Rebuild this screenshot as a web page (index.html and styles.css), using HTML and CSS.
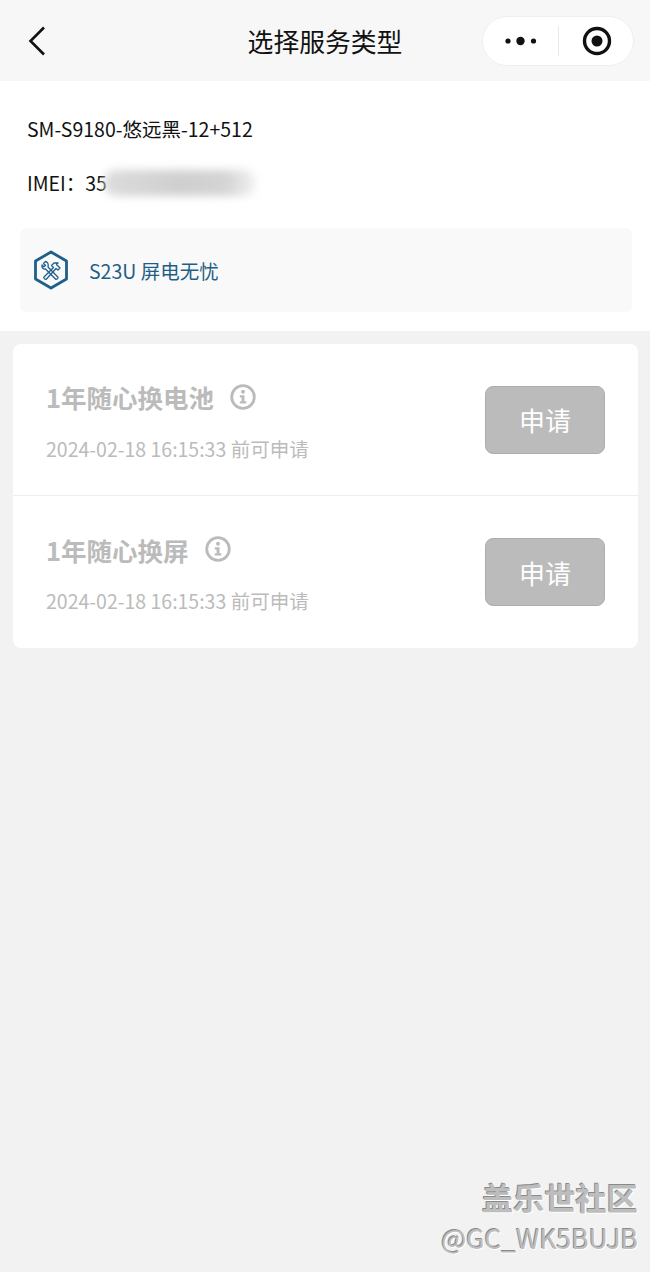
FILE: index.html
```html
<!DOCTYPE html>
<html lang="zh-CN">
<head>
    <meta charset="UTF-8">
    <meta name="viewport" content="width=device-width, initial-scale=1.0">
    <title>选择服务类型</title>
    <link rel="stylesheet" href="styles.css">
</head>
<body>
    <header class="navbar">
        <svg class="back" width="20" height="32" viewBox="0 0 20 32">
            <path d="M17 2.500 L3.500 16 L17 29.500" fill="none" stroke="#111" stroke-width="2.600"/>
        </svg>
        <h1 class="nav-title">选择服务类型</h1>
        <div class="capsule">
            <svg class="capsule-dots" width="32" height="10" viewBox="0 0 32 10">
                <circle cx="3" cy="5" r="2.600" fill="#111"/>
                <circle cx="15.500" cy="5" r="4.200" fill="#111"/>
                <circle cx="28.500" cy="5" r="2.600" fill="#111"/>
            </svg>
            <span class="capsule-line"></span>
            <svg class="capsule-target" width="30" height="30" viewBox="0 0 30 30">
                <circle cx="15" cy="15" r="12.500" fill="none" stroke="#111" stroke-width="3.400"/>
                <circle cx="15" cy="15" r="5.500" fill="#111"/>
            </svg>
        </div>
    </header>

    <section class="device">
        <p class="device-line">SM-S9180-悠远黑-12+512</p>
        <p class="device-line imei">IMEI：35<span class="imei-blur"></span></p>
        <div class="plan">
            <svg class="plan-icon" width="36" height="40" viewBox="0 0 36 40">
                <path d="M18 2 L33.500 11 L33.500 29 L18 38 L2.500 29 L2.500 11 Z" fill="none" stroke="#1f5f8b" stroke-width="2.800" stroke-linejoin="round"/>
                <g fill="none" stroke="#1f5f8b" stroke-width="1.300" stroke-linejoin="round">
                    <path d="M12.500 11.500 L10.500 13.500 L12.500 15.500 L10.800 16.800 L9 15 C8.300 17.500 10.200 19.500 12.500 19 L22.500 29 C23.500 30 25.800 28 24.800 27 L15 17 C15.800 14 14.500 11.800 12.500 11.500 Z"/>
                    <path d="M11 27 L20.500 17.500 L18.500 15.500 L21 13 L25 13 L23.500 14.500 L27 18 L25 20 L23 18.500 L13.500 29 C12.500 30 10 28 11 27 Z"/>
                </g>
            </svg>
            <span class="plan-name">S23U 屏电无忧</span>
        </div>
    </section>

    <main class="card">
        <div class="service">
            <div class="service-info">
                <div class="service-head">
                    <span class="service-name">1年随心换电池</span>
                    <svg class="info-icon" width="26" height="26" viewBox="0 0 26 26">
                        <circle cx="13" cy="13" r="11.300" fill="none" stroke="#bbb" stroke-width="2.800"/>
                        <circle cx="13" cy="7.800" r="2" fill="#bbb"/>
                        <path d="M9.800 11.200 H14.500 V17.300 H16.300 V19.500 H9.800 V17.300 H11.600 V13.400 H9.800 Z" fill="#bbb"/>
                    </svg>
                </div>
                <p class="service-time">2024-02-18 16:15:33 前可申请</p>
            </div>
            <button class="apply" disabled>申请</button>
        </div>
        <div class="service">
            <div class="service-info">
                <div class="service-head">
                    <span class="service-name">1年随心换屏</span>
                    <svg class="info-icon" width="26" height="26" viewBox="0 0 26 26">
                        <circle cx="13" cy="13" r="11.300" fill="none" stroke="#bbb" stroke-width="2.800"/>
                        <circle cx="13" cy="7.800" r="2" fill="#bbb"/>
                        <path d="M9.800 11.200 H14.500 V17.300 H16.300 V19.500 H9.800 V17.300 H11.600 V13.400 H9.800 Z" fill="#bbb"/>
                    </svg>
                </div>
                <p class="service-time">2024-02-18 16:15:33 前可申请</p>
            </div>
            <button class="apply" disabled>申请</button>
        </div>
    </main>

    <div class="watermark">
        <div class="watermark-name">盖乐世社区</div>
        <div class="watermark-user">@GC_WK5BUJB</div>
    </div>
</body>
</html>
```

FILE: styles.css
```css
* {
    box-sizing: border-box;
}
html, body {
    margin: 0;
    padding: 0;
}
body {
    position: relative;
    width: 650px;
    height: 1272px;
    overflow: hidden;
    background: #f2f2f2;
    font-family: "Noto Sans CJK SC", "Noto Sans", sans-serif;
    color: #111;
}
p {
    margin: 0;
}

/* Top bar */
.navbar {
    position: relative;
    height: 81px;
    background: #f7f7f7;
    display: flex;
    align-items: center;
    justify-content: space-between;
    padding: 0 16px 0 27px;
}
.nav-title {
    position: absolute;
    left: 0;
    right: 0;
    top: 21px;
    margin: 0;
    text-align: center;
    font-size: 25.800px;
    line-height: 40px;
    font-weight: 400;
}
.capsule {
    width: 152px;
    height: 50px;
    margin-top: 1px;
    background: #fff;
    border: 1px solid #efefef;
    border-radius: 25px;
    display: flex;
    align-items: center;
    padding-left: 22px;
}
.capsule-line {
    width: 1px;
    height: 30px;
    margin: 0 23px 0 21px;
    background: #e8e8e8;
}

/* Device info */
.device {
    height: 250px;
    background: #fff;
    padding: 30px 18px 0 20px;
}
.device-line {
    font-size: 19.500px;
    line-height: 36px;
    padding-left: 7px;
}
.imei {
    margin-top: 18px;
    display: flex;
    align-items: center;
}
.imei-blur {
    width: 152px;
    height: 26px;
    margin-left: -3px;
    background: linear-gradient(90deg, #dcdcdc, #cfcfcf 50%, #d4d4d4 80%, #f2f2f2);
    border-radius: 12px;
    filter: blur(4px);
}
.plan {
    height: 84px;
    margin-top: 27px;
    background: #f9f9f9;
    border-radius: 6px;
    display: flex;
    align-items: center;
    padding-left: 13px;
}
.plan-name {
    margin-left: 20px;
    font-size: 19.500px;
    color: #1f5f85;
}

/* Service list */
.card {
    width: 625px;
    height: 304px;
    margin: 13px 0 0 13px;
    background: #fff;
    border-radius: 8px;
}
.service {
    height: 151px;
    display: flex;
    align-items: center;
    justify-content: space-between;
    padding: 0 33px;
}
.service + .service {
    height: 153px;
    border-top: 1px solid #eee;
}
.service-head {
    display: flex;
    align-items: center;
    height: 40px;
}
.service-name {
    font-size: 25.500px;
    font-weight: 700;
    color: #bbb;
}
.info-icon {
    margin-left: 16px;
}
.service-time {
    margin-top: 18px;
    font-size: 19.500px;
    line-height: 28px;
    color: #bbb;
}
.apply {
    width: 120px;
    height: 68px;
    padding: 0;
    background: #bbb;
    border: 1px solid #adadad;
    border-radius: 8px;
    color: #fff;
    font-family: inherit;
    font-size: 26px;
}

/* Watermark over the page corner */
.watermark {
    position: absolute;
    right: 12px;
    top: 1174px;
    text-align: right;
    color: #bdbdbd;
    text-shadow: -1px -1px 0 #8a8a8a, 1px 1px 0 #fff;
}
.watermark-name {
    font-size: 31.200px;
    line-height: 46px;
    font-weight: 700;
}
.watermark-user {
    font-size: 26.500px;
    line-height: 36px;
}
```
